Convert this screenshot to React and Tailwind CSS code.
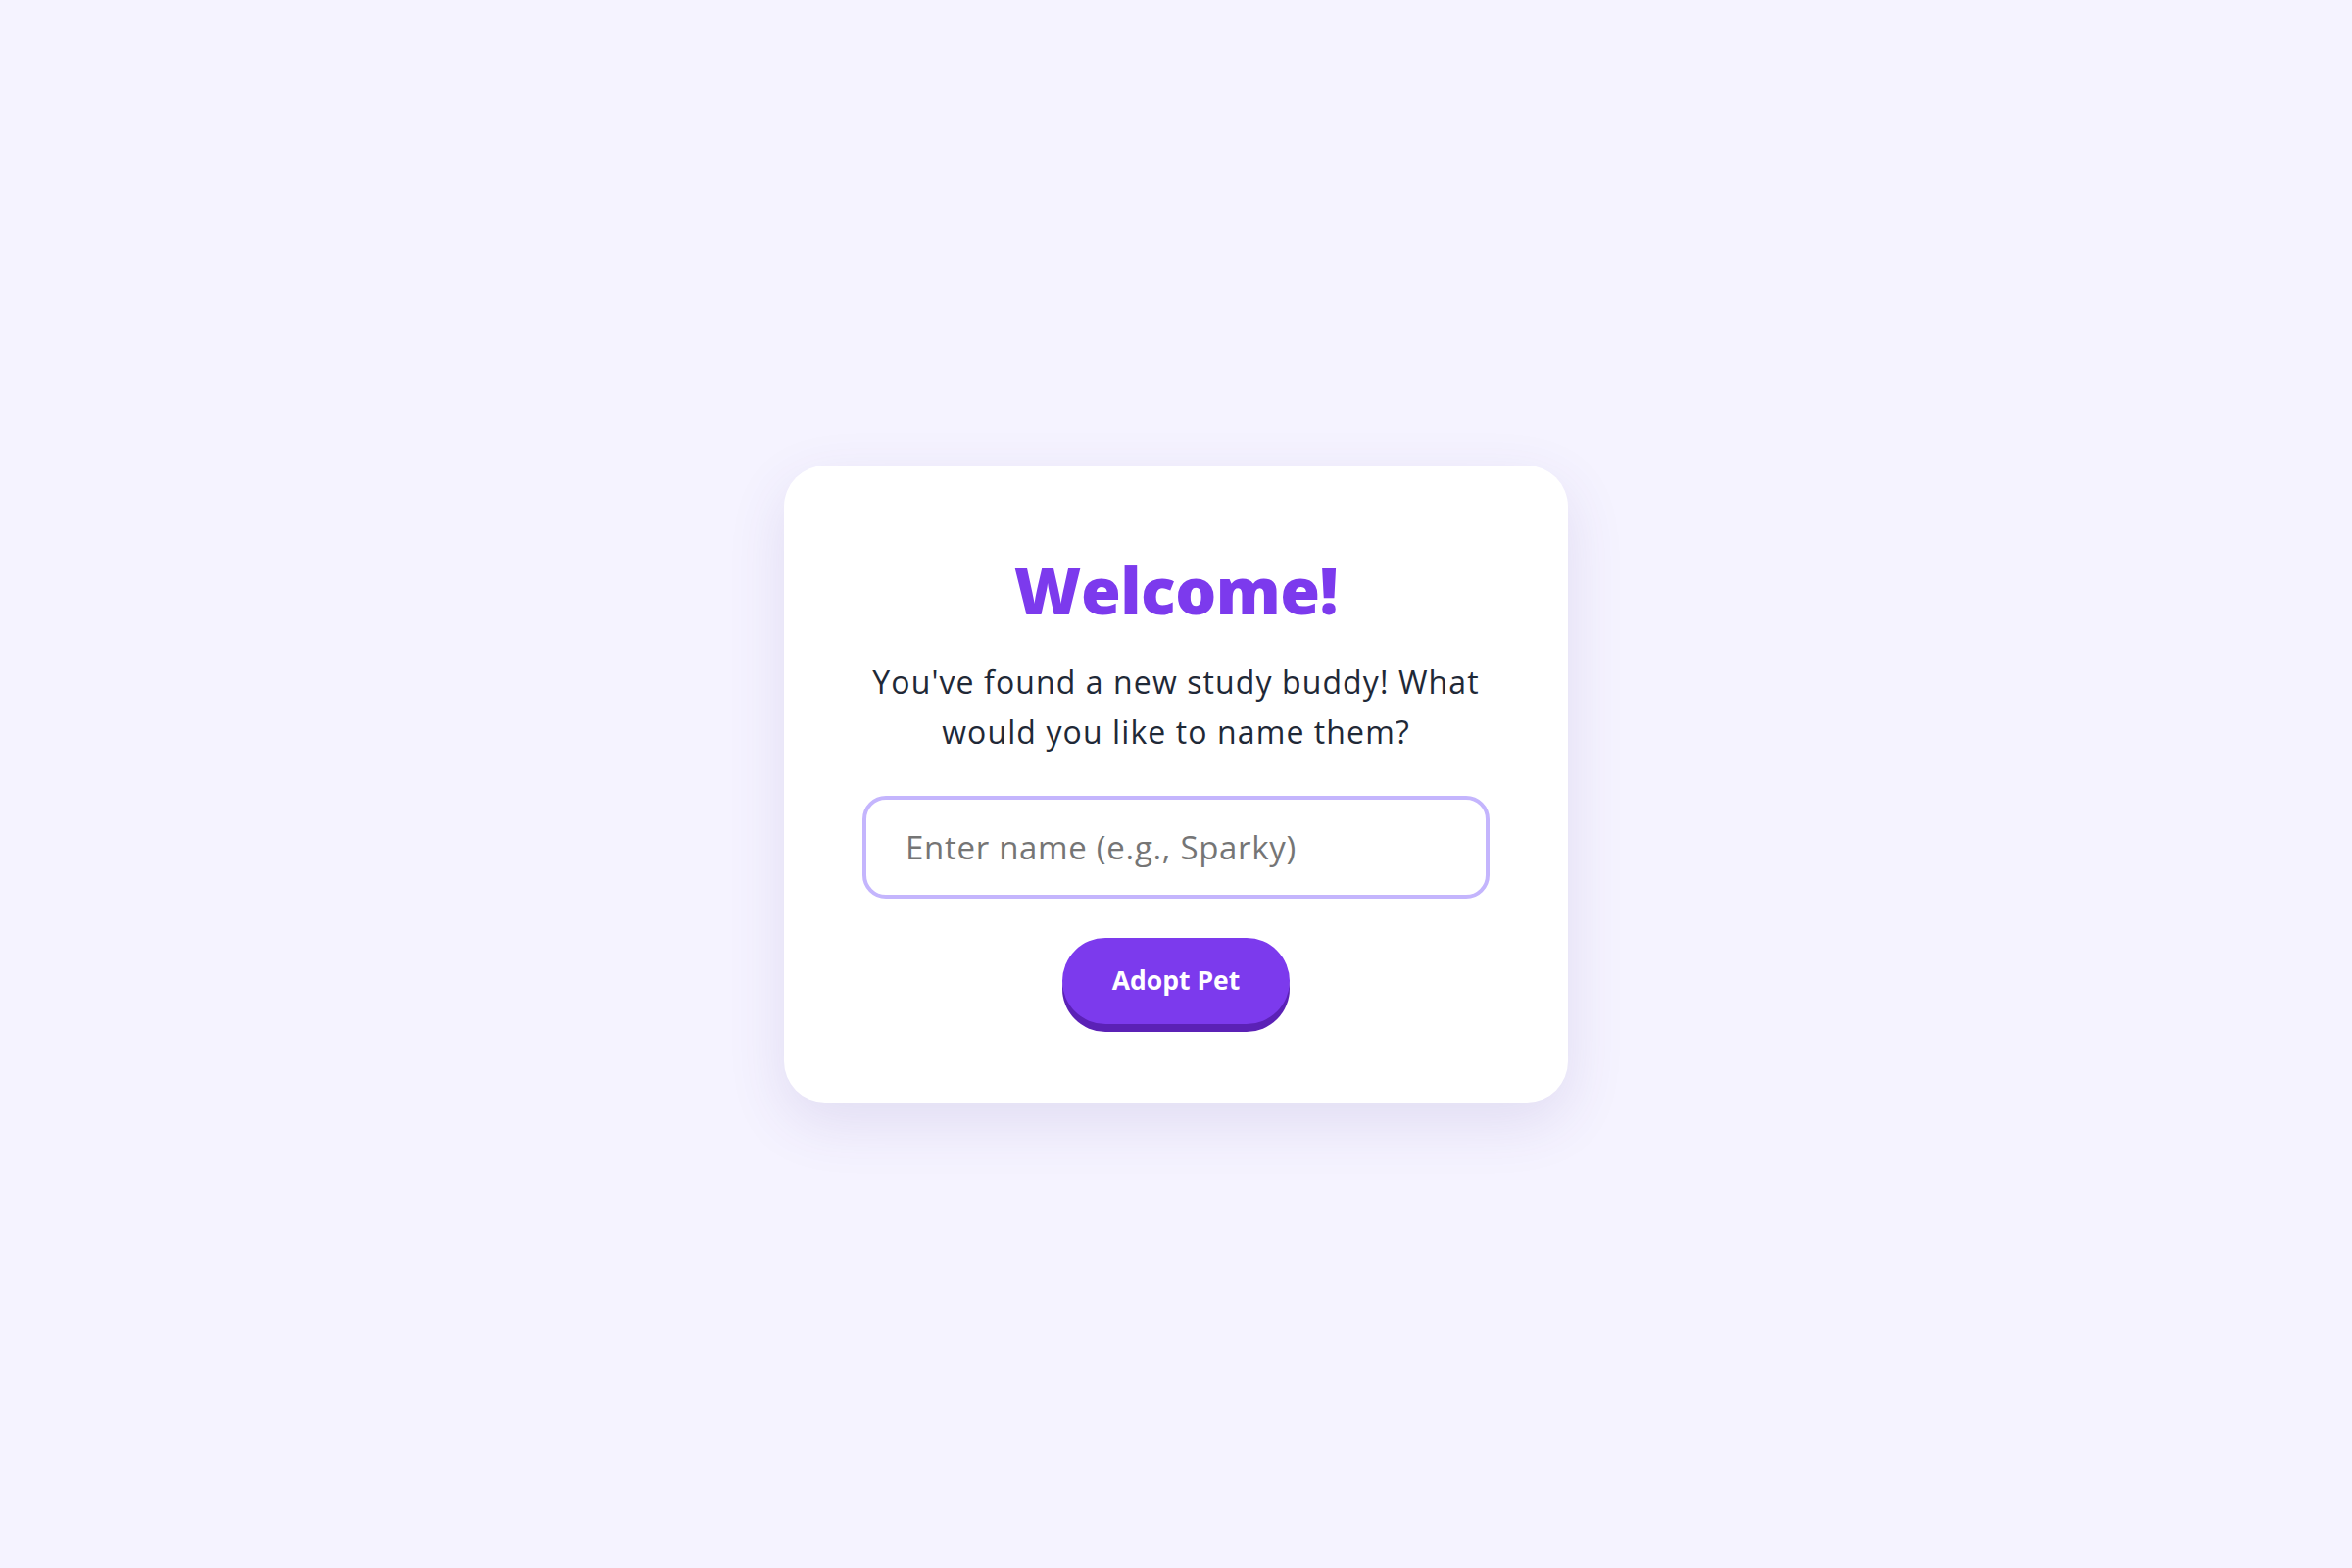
export default function App() {
  return (
    <div
      className="min-h-screen w-full flex items-center justify-center bg-[#f5f3ff]"
      style={{ fontFamily: "'Open Sans', 'Noto Sans', sans-serif" }}
    >
      <div className="w-[800px] rounded-[42px] bg-white px-[80px] py-[80px] text-center shadow-[0_20px_60px_rgba(80,60,150,0.12)] flex flex-col items-center">
        <h1 className="pt-[8px] text-[66px] font-extrabold leading-[76px] text-[#7c3aed] tracking-[-0.5px]">
          Welcome!
        </h1>
        <p className="mt-[31px] text-[32px] leading-[51px] tracking-[1.1px] text-[#1f2937]">
          You've found a new study buddy! What would you like to name them?
        </p>
        <input
          type="text"
          placeholder="Enter name (e.g., Sparky)"
          className="mt-[40px] w-full h-[105px] rounded-[24px] border-4 border-[#c4b5fd] bg-white px-[40px] text-[33px] tracking-[0.7px] text-[#1f2937] placeholder:text-[#757575] outline-none"
        />
        <button className="mt-[40px] h-[88px] px-[51px] rounded-full bg-[#7c3aed] text-white text-[26.5px] font-bold shadow-[0_8px_0_#5b21b6]">
          Adopt Pet
        </button>
      </div>
    </div>
  );
}
